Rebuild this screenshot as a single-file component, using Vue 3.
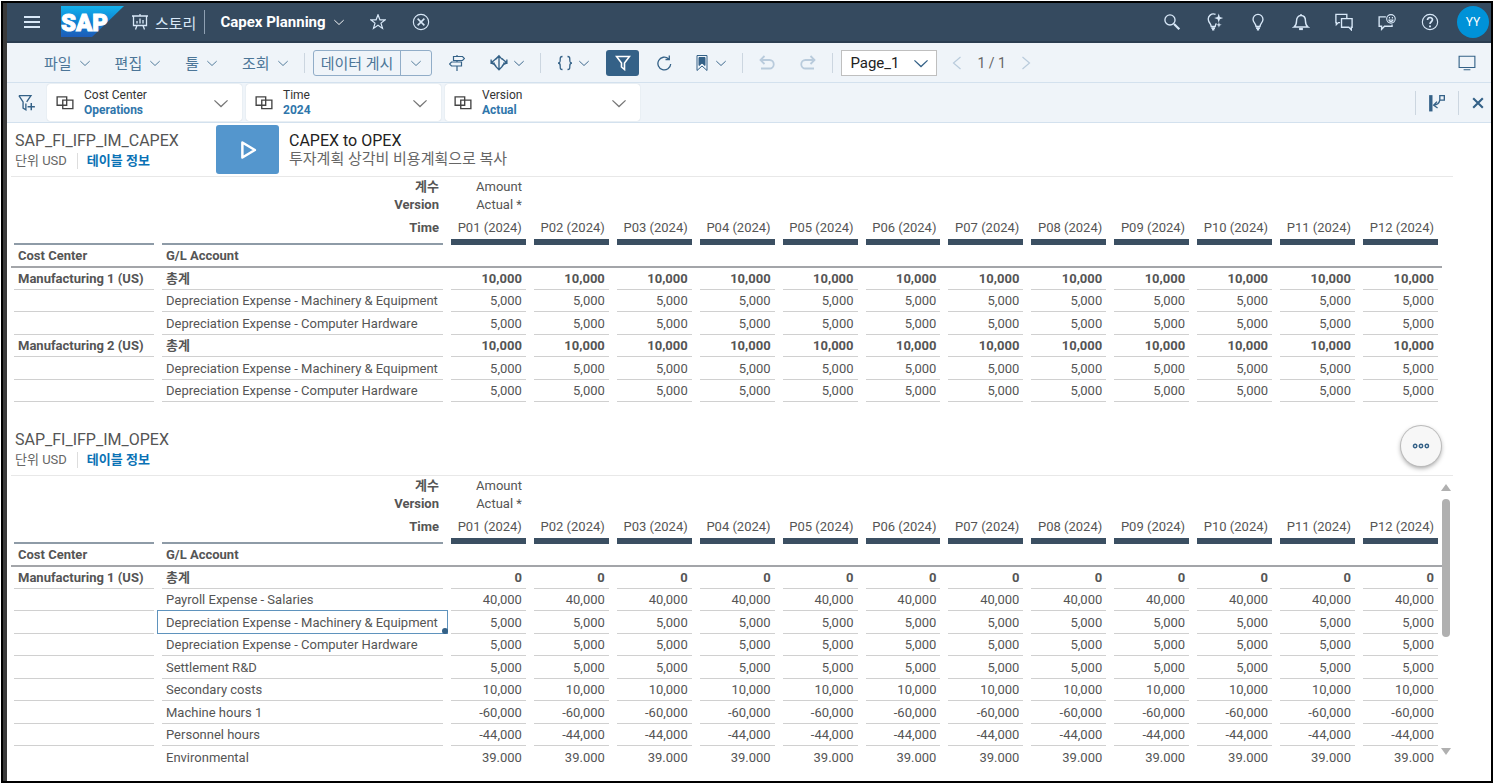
<template>
  <div class="app-frame">
    <header class="shell">
      <button class="icon-btn menu-btn" aria-label="Menu"><Icon name="menu" /></button>
      <svg class="logo" width="63" height="32" viewBox="0 0 63 32" role="img" aria-label="SAP">
        <defs>
          <linearGradient id="logoFill" x1="0" y1="0" x2="0" y2="1">
            <stop offset="0" stop-color="#12b2ee" />
            <stop offset="0.5" stop-color="#1083d2" />
            <stop offset="1" stop-color="#1d5cb8" />
          </linearGradient>
        </defs>
        <path d="M0 0H63L31 31H0Z" fill="url(#logoFill)" />
        <text x="0" y="25" class="logo-text">SAP</text>
      </svg>
      <a href="#" class="story-link"><Icon name="story" />스토리</a>
      <span class="shell-divider"></span>
      <button class="story-title">Capex Planning <Icon name="chevron" :size="10" /></button>
      <button class="icon-btn star-btn" aria-label="Favorite"><Icon name="star" /></button>
      <button class="icon-btn" aria-label="Close story"><Icon name="closeCircle" :size="18" /></button>
      <div class="shell-actions">
        <button v-for="a in shellActions" :key="a.icon" class="icon-btn" :aria-label="a.label">
          <Icon :name="a.icon" :size="18" />
        </button>
        <button class="avatar">YY</button>
      </div>
    </header>

    <div class="toolbar">
      <div class="menus">
        <button v-for="m in menus" :key="m" class="tool">{{ m }}<Icon name="chevron" :size="10" /></button>
      </div>
      <span class="divider after-menus"></span>
      <div class="split-btn">
        <button class="split-main">데이터 게시</button>
        <button class="split-arrow" aria-label="데이터 게시 옵션"><Icon name="chevron" :size="10" /></button>
      </div>
      <div class="tool-group">
        <button class="tool" aria-label="Actions"><Icon name="signpost" /></button>
        <button class="tool" aria-label="Allocate"><Icon name="distribute" :size="18" /><Icon name="chevron" :size="10" /></button>
      </div>
      <span class="divider"></span>
      <div class="tool-group tight">
        <button class="tool" aria-label="Formula"><Icon name="braces" /><Icon name="chevron" :size="10" /></button>
        <button class="tool-active" aria-label="Filter"><Icon name="filter" /></button>
        <button class="tool" aria-label="Refresh"><Icon name="refresh" /></button>
        <button class="tool bookmark" aria-label="Bookmark"><Icon name="bookmark" /><Icon name="chevron" :size="10" /></button>
      </div>
      <span class="divider"></span>
      <div class="tool-group">
        <button class="tool" aria-label="Undo" disabled><Icon name="undo" /></button>
        <button class="tool" aria-label="Redo" disabled><Icon name="redo" /></button>
      </div>
      <span class="divider before-select"></span>
      <div class="page-select">
        <select v-model="page" aria-label="Page">
          <option>Page_1</option>
        </select>
        <Icon name="chevron" :size="14" />
      </div>
      <div class="pager">
        <button aria-label="Previous page" disabled><Icon name="left" /></button>
        <span>1 / 1</span>
        <button aria-label="Next page" disabled><Icon name="right" /></button>
      </div>
      <button class="tool device" aria-label="Display"><Icon name="monitor" :size="18" /></button>
    </div>

    <div class="filter-bar">
      <button class="tool add-filter" aria-label="Add filter"><Icon name="filterAdd" :size="18" /></button>
      <button v-for="f in filters" :key="f.name" class="filter-card">
        <Icon name="overlap" :size="18" />
        <span class="filter-text">
          <span>{{ f.name }}</span>
          <strong>{{ f.value }}</strong>
        </span>
        <Icon class="card-arrow" name="chevron" :size="14" />
      </button>
      <div class="filter-actions">
        <span class="divider"></span>
        <button class="tool" aria-label="Dock filter"><Icon name="dock" :size="18" /></button>
        <span class="divider"></span>
        <button class="tool" aria-label="Close filter"><Icon name="close" :size="14" /></button>
      </div>
    </div>

    <main>
      <section v-for="s in sections" :key="s.title" class="model">
        <div class="model-head">
          <div class="model-name">
            <h2>{{ s.title }}</h2>
            <p><span class="unit">단위 USD</span><a href="#">테이블 정보</a></p>
          </div>
          <template v-if="s.action">
            <button class="run-btn" :aria-label="s.action"><Icon name="play" :size="20" /></button>
            <div class="run-text">
              <h3>{{ s.action }}</h3>
              <p>{{ s.actionText }}</p>
            </div>
          </template>
          <button v-else class="more-btn" aria-label="More">
            <Icon name="dots" :size="18" />
          </button>
        </div>
        <div class="model-body">
          <table>
            <colgroup>
              <col class="col-center" />
              <col class="col-account" />
              <col v-for="p in periods" :key="p" />
            </colgroup>
            <thead>
              <tr class="r-measure">
                <td></td>
                <th><div class="cell">계수</div></th>
                <td><div class="cell">Amount</div></td>
                <td colspan="11"></td>
              </tr>
              <tr class="r-version">
                <td></td>
                <th><div class="cell">Version</div></th>
                <td><div class="cell">Actual *</div></td>
                <td colspan="11"></td>
              </tr>
              <tr class="r-time">
                <td><div class="cell"></div></td>
                <th><div class="cell">Time</div></th>
                <th v-for="p in periods" :key="p" class="period"><div class="cell">{{ p }}</div></th>
              </tr>
              <tr class="r-dims">
                <th><div class="cell">Cost Center</div></th>
                <th><div class="cell">G/L Account</div></th>
                <td colspan="12"></td>
              </tr>
            </thead>
            <tbody>
              <tr v-for="(r, i) in s.rows" :key="i" :class="{ total: r.total }">
                <th><div class="cell">{{ r.center }}</div></th>
                <th :class="{ selected: r.selected }"><div class="cell">{{ r.account }}</div></th>
                <td v-for="p in periods" :key="p"><div class="cell">{{ r.value }}</div></td>
              </tr>
            </tbody>
          </table>
          <div v-if="s.scroll" class="scrollbar">
            <span class="arrow up"></span>
            <span class="track"><span class="thumb"></span></span>
            <span class="arrow down"></span>
          </div>
        </div>
      </section>
    </main>
  </div>
</template>

<script setup>
import { h, ref } from 'vue';

// 16x16 line icons
const icons = {
  menu: '<path d="M0 3h16M0 8h16M0 13h16" stroke-width="2"/>',
  story: '<path d="M0 2h16M1.5 2v9.500h13V2M5 11.500L3.500 15.500M11 11.500l1.500 4M5 9.500V7M8 9.500v-5M11 9.500V6M8 0v2" stroke-width="1.300"/>',
  chevron: '<path d="M.5 5L8 12l7.500-7" stroke-width="1.500"/>',
  star: '<path d="M8 .8l1.900 5h5.300l-4.200 3.300 1.500 5.300L8 11.300l-4.500 3.100L5 9.100.8 5.800h5.300z" stroke-width="1.200"/>',
  closeCircle: '<circle cx="8" cy="8" r="6.800"/><path d="M5 5l6 6M11 5l-6 6" stroke-width="1.400"/>',
  search: '<circle cx="6.200" cy="6.200" r="4.500" stroke-width="1.200"/><path d="M9.800 9.800l4.700 4.700" stroke-width="2"/>',
  bulbSpark: '<path d="M8.500 1.300A4.500 4.500 0 0 0 2.200 6.500c.3 2.300 2.200 2.700 2.400 5.500h3.600c.1-1.400.5-2.100 1-2.800" stroke-width="1.200"/><path d="M4.800 13.500h3.200M5.400 14.800h2" stroke-width="1.600"/><path d="M11.300 .5l1 3 3 1-3 1-1 3-1-3-3-1 3-1zM11.500 8l.6 1.900 1.900.6-1.900.6-.6 1.900-.6-1.900-1.900-.6 1.900-.6z" fill="currentColor" stroke="none"/>',
  bulb: '<path d="M8 1.200a4.400 4.400 0 0 0-4.400 4.600c0 2.700 2.400 3.300 2.600 6.200h3.600c.2-2.900 2.600-3.500 2.600-6.200A4.400 4.400 0 0 0 8 1.200z" stroke-width="1.200"/><path d="M6.300 13.500h3.400M7 14.900h2" stroke-width="1.500"/>',
  bell: '<path d="M1.800 12.500c1.700-1.200 2.200-2.500 2.200-5.200C4 4.200 5.500 2.300 8 2.300s4 1.900 4 5c0 2.700.5 4 2.200 5.200zM8 2.300V.8" stroke-width="1.300"/><path d="M6.300 14.200h3.400" stroke-width="2"/>',
  chats: '<path d="M4.500 8.500H3L1.200 10.300V8.500H.8v-7.300h9.700V4.500M5.800 5h9.400v7.700h-.7V15l-2.200-2.300H5.800z" stroke-width="1.200"/>',
  feedback: '<path d="M7 3.500H1v8.300h2.200v2.700l2.600-2.700h6.700v-1.500" stroke-width="1.200"/><circle cx="11.500" cy="5.200" r="3.800"/><path d="M10.200 3.500v1.300M12.800 3.500v1.300M9.200 6.200h4.600M9.700 6.500c.8 1.500 2.800 1.500 3.600 0"/>',
  help: '<circle cx="8" cy="8" r="6.800"/><path d="M5.800 6.300c0-3 4.400-3 4.400-.2C10.200 7.800 8 7.800 8 9.800" stroke-width="1.500"/><path d="M8 11v1.600" stroke-width="1.700"/>',
  signpost: '<path d="M8 0v1.500M4.500 1.500h9l2 2-2 2h-9zM8 5.500V7M12.500 7h-10l-2 2 2 2h10zM8 11v5" stroke-width="1.200"/>',
  distribute: '<path d="M8 2v11M5.500 4.500L8 1.500l2.500 3M8 1.500L5.500 4C4.200 5.300 2.800 6 1.200 8c2 .5 3.500 1.500 4.300 3.500L8 14l2.500-2.500c.8-2 2.300-3 4.300-3.500-1.600-2-3-2.700-4.300-4M1 4.800V8.200h3.300M15 4.800v3.400h-3.300" stroke-width="1.200"/>',
  braces: '<path d="M5.500 1.500C3 1.500 3.200 3 3.200 5S3 8 1 8c2 0 2.200 1 2.200 3s-.2 3.500 2.300 3.500M10.500 1.500c2.500 0 2.300 1.500 2.300 3.500s.2 3 2.200 3c-2 0-2.200 1-2.200 3s.2 3.500-2.300 3.500" stroke-width="1.300"/>',
  filter: '<path d="M1.500 1.500h13L9.500 8v6.500l-3-2.500V8z" stroke-width="1.600"/>',
  filterAdd: '<path d="M.8 1.500h10.700L7.700 7M.8 1.500L4.500 7v5.500l2.500 1.500V8.500" stroke-width="1.200"/><path d="M11.800 8v6.500M8.500 11.300h6.500" stroke-width="1.300"/>',
  refresh: '<path d="M12.500 3.700A6.400 6.400 0 1 0 14.700 9M9.500 4.500h3.800V.5" stroke-width="1.300"/>',
  bookmark: '<path d="M3 .5h10v15l-5-4.500-5 4.500z"/><path d="M5 2.500h6v8L8 8l-3 2.500z" fill="currentColor"/>',
  undo: '<path d="M5.500 1L1.500 5l4 4M1.500 5H10.500a4 4 0 0 1 0 8.500H2" stroke-width="1.800"/>',
  redo: '<path d="M10.500 1l4 4-4 4M14.500 5H5.500a4 4 0 0 0 0 8.500H14" stroke-width="1.800"/>',
  left: '<path d="M11.500 2L4.500 8l7 6" stroke-width="1.200"/>',
  right: '<path d="M4.500 2l7 6-7 6" stroke-width="1.200"/>',
  monitor: '<path d="M1 2h14v10H1zM5 14h6"/>',
  overlap: '<path d="M1 2.500h8.500v7.500H1zM6 5.500h9V13H6z" stroke-width="1.200"/>',
  dock: '<path d="M1 1h3v14.500H1z" fill="currentColor" stroke="none"/><path d="M10.500 1.500h4v4h-4zM10.500 5.500C10 8 8 9.800 5 10M8 6.800L5 10l3.500 2.500" stroke-width="1.200"/>',
  close: '<path d="M2.500 2.500l11 11M13.500 2.500l-11 11" stroke-width="2.400"/>',
  play: '<path d="M3.500 2l10 6-10 6z" stroke-width="2" stroke-linejoin="round"/>',
  dots: '<circle cx="2.800" cy="8" r="1.500" stroke-width="1.300"/><circle cx="8" cy="8" r="1.500" stroke-width="1.300"/><circle cx="13.200" cy="8" r="1.500" stroke-width="1.300"/>'
};

const Icon = (props) => h('svg', {
  viewBox: '0 0 16 16',
  width: props.size || 16,
  height: props.size || 16,
  fill: 'none',
  stroke: 'currentColor',
  'aria-hidden': 'true',
  innerHTML: icons[props.name]
});
Icon.props = ['name', 'size'];

const page = ref('Page_1');

const menus = ['파일', '편집', '툴', '조회'];

const shellActions = [
  { icon: 'search', label: 'Search' },
  { icon: 'bulbSpark', label: 'Insights' },
  { icon: 'bulb', label: 'Ideas' },
  { icon: 'bell', label: 'Notifications' },
  { icon: 'chats', label: 'Discussions' },
  { icon: 'feedback', label: 'Feedback' },
  { icon: 'help', label: 'Help' }
];

const filters = [
  { name: 'Cost Center', value: 'Operations' },
  { name: 'Time', value: '2024' },
  { name: 'Version', value: 'Actual' }
];

const periods = Array.from({ length: 12 }, (_, i) => `P${String(i + 1).padStart(2, '0')} (2024)`);

const machinery = 'Depreciation Expense - Machinery & Equipment';
const hardware = 'Depreciation Expense - Computer Hardware';

const sections = [
  {
    title: 'SAP_FI_IFP_IM_CAPEX',
    action: 'CAPEX to OPEX',
    actionText: '투자계획 상각비 비용계획으로 복사',
    rows: [
      { center: 'Manufacturing 1 (US)', account: '총계', value: '10,000', total: true },
      { account: machinery, value: '5,000' },
      { account: hardware, value: '5,000' },
      { center: 'Manufacturing 2 (US)', account: '총계', value: '10,000', total: true },
      { account: machinery, value: '5,000' },
      { account: hardware, value: '5,000' }
    ]
  },
  {
    title: 'SAP_FI_IFP_IM_OPEX',
    scroll: true,
    rows: [
      { center: 'Manufacturing 1 (US)', account: '총계', value: '0', total: true },
      { account: 'Payroll Expense - Salaries', value: '40,000' },
      { account: machinery, value: '5,000', selected: true },
      { account: hardware, value: '5,000' },
      { account: 'Settlement R&D', value: '5,000' },
      { account: 'Secondary costs', value: '10,000' },
      { account: 'Machine hours 1', value: '-60,000' },
      { account: 'Personnel hours', value: '-44,000' },
      { account: 'Environmental', value: '39.000' }
    ]
  }
];
</script>

<style>
body { background: #fff; }
</style>

<style scoped>
.app-frame {
  box-sizing: border-box;
  min-height: calc(100vh - 2px);
  margin: 1px;
  border: 2px solid #000;
  box-shadow: inset 4px 0 0 #3a3a3a;
  padding-left: 4px;
  background: #fff;
  color: #555;
  font-family: Roboto, "Noto Sans CJK KR", sans-serif;
  font-size: 13px;
}

button {
  display: flex;
  align-items: center;
  justify-content: center;
  padding: 0;
  border: none;
  background: none;
  color: inherit;
  font: inherit;
  cursor: pointer;
}

h2, h3, p { margin: 0; font-weight: 400; }
svg { display: block; flex: none; }

/* shell bar */
.shell {
  display: flex;
  align-items: center;
  height: 38px;
  padding-left: 17px;
  border-bottom: 2px solid #2b3d50;
  background: #354a5f;
  color: #d8e8f8;
}

.logo { margin-left: 21px; }
.logo-text { fill: #fff; stroke: #fff; stroke-width: 1; font-family: Roboto, sans-serif; font-size: 24px; font-weight: 900; }
.story-link { display: flex; align-items: center; gap: 7px; margin-left: 8px; color: inherit; font-size: 15px; text-decoration: none; }
.shell-divider { width: 1px; height: 24px; margin: 0 15px 0 8px; background: #8fa0b2; }
.story-title { gap: 8px; color: #fff; font-size: 15px; font-weight: 700; }
.star-btn { margin: 0 26px; }
.shell-actions { display: flex; align-items: center; gap: 25px; margin-left: auto; padding-right: 2px; }
.avatar { width: 32px; height: 32px; margin-left: -7px; border-radius: 50%; background: #0092d8; color: #fff; font-size: 12px; }

/* toolbar */
.toolbar {
  display: flex;
  align-items: center;
  height: 39px;
  padding-left: 37px;
  border-bottom: 1px solid #d3e1ee;
  background: #eff4f9;
  color: #346187;
}

.menus { display: flex; gap: 25px; font-size: 15px; }
.tool { gap: 6px; }
.menus .tool { gap: 8px; color: #4c7698; }
.tool:disabled { color: #b9cbdc; }
.divider { width: 1px; height: 20px; margin: 0 16px; background: #ccd6e0; }
.divider.after-menus, .divider.before-select { margin-right: 8px; }
.tool-group { display: flex; align-items: center; gap: 25px; }
.tool-group.tight { gap: 17px; }
.bookmark { margin-left: 5px; }
.split-btn { display: flex; height: 24px; margin-right: 17px; border: 1px solid #91adc8; border-radius: 3px; color: #4c7698; font-size: 15px; }
.split-main { padding: 0 7px; border-right: 1px solid #91adc8; }
.split-arrow { width: 30px; }
.tool-active { width: 33px; height: 26px; border-radius: 3px; background: #346187; color: #fff; }
.page-select { position: relative; color: #346187; }
.page-select select {
  width: 96px;
  height: 26px;
  padding: 0 8px;
  border: 1px solid #bfbfbf;
  border-radius: 0;
  appearance: none;
  background: #fff;
  color: #222;
  font: 15px Roboto, sans-serif;
}
.page-select svg { position: absolute; top: 6px; right: 9px; pointer-events: none; }
.pager { display: flex; align-items: center; gap: 12px; margin-left: 12px; color: #666; font-size: 14px; }
.pager button { color: #b9cbdc; }
.device { margin: 0 15px 0 auto; }

/* filter bar */
.filter-bar {
  display: flex;
  align-items: center;
  gap: 4px;
  height: 39px;
  border-bottom: 1px solid #d3e1ee;
  background: #eff4f9;
  color: #346187;
}

.add-filter { width: 36px; padding-left: 4px; box-sizing: border-box; }
.filter-card {
  box-sizing: border-box;
  width: 195px;
  height: 37px;
  padding: 0 14px 0 9px;
  border-radius: 3px;
  background: #fff;
  box-shadow: 0 0 1px #b5c2ce;
  color: #444;
  text-align: left;
}
.filter-text { display: flex; flex: 1; flex-direction: column; margin-left: 10px; font-size: 12px; line-height: 15px; color: #333; }
.filter-text strong { color: #2f76ab; }
.card-arrow { color: #777; }
.filter-actions { display: flex; align-items: center; height: 24px; margin-left: auto; padding-right: 6px; }
.filter-actions .divider { height: 24px; margin: 0 12px; }

/* models */
.model { margin: 0 38px 20px 4px; }
.model:last-child { margin-bottom: 0; }
.model-head { display: flex; align-items: center; height: 53px; padding-left: 4px; border-bottom: 1px solid #e8e8e8; }
.model-name { width: 201px; padding-top: 2px; }
.model-name h2 { font-size: 16px; line-height: 20px; color: #555; }
.model-name p { display: flex; align-items: center; font-size: 13px; line-height: 20px; color: #666; }
.unit { padding-right: 10px; border-right: 1px solid #ddd; line-height: 16px; }
.model-name a { margin-left: 9px; color: #0a72b5; font-weight: 700; text-decoration: none; }
.run-btn { width: 63px; height: 49px; border-radius: 3px; background: #5496cd; color: #fff; }
.run-text { margin-left: 10px; }
.run-text h3 { font-size: 16px; line-height: 19px; color: #222; }
.run-text p { font-size: 15px; line-height: 19px; color: #666; }
.more-btn {
  width: 40px;
  height: 40px;
  margin: 0 12px 6px auto;
  border-radius: 50%;
  background: #f7f7f7;
  box-shadow: 0 0 0 1px #bbb, 0 2px 5px #999;
  color: #346187;
}

.model-body { display: flex; }
table { flex: 1; width: 100%; border-collapse: collapse; table-layout: fixed; }
.col-center { width: 147px; }
.col-account { width: 289px; }
th, td { padding: 0; font-weight: 400; text-align: right; }
.cell { box-sizing: border-box; height: 22px; margin: 0 4px; padding: 0 4px; border-bottom: 1px solid #d0d0d0; line-height: 22px; white-space: nowrap; }
tr > :first-child .cell { margin-left: 3px; }

thead tr:nth-child(-n+3) th:nth-child(2), .r-dims th, .total th, .total td { font-weight: 700; }
.r-measure .cell { height: 19px; border: none; line-height: 20px; }
.r-version .cell { height: 17px; border: none; line-height: 17px; }
.r-time .cell { height: 32px; padding-top: 4px; border-bottom: 2px solid #8e9ba7; line-height: 22px; }
.r-time .period .cell { border-bottom: 6px solid #3b4f62; font-weight: 400; }
.r-dims .cell { height: 21px; border: none; }
.r-dims th, .r-dims td { border-bottom: 2px solid #a3a5a9; }
.r-dims th, tbody th { text-align: left; }
tbody tr:nth-child(2n+3) .cell { height: 23px; line-height: 23px; }
.model:last-child tbody tr:last-child .cell { border-bottom: none; }

.selected { position: relative; }
.selected::before { content: ""; position: absolute; inset: -1px -1px 0 -1px; border: 1px solid #5f93bd; }
.selected::after { content: ""; position: absolute; right: -1px; bottom: 0; width: 6px; height: 6px; border-radius: 50%; background: #346187; }

.scrollbar { display: flex; flex-direction: column; align-items: center; width: 8px; margin: 8px 3px 14px 0; }
.model:first-child .model-body { padding-right: 11px; }
.arrow { border: 5px solid transparent; }
.arrow.up { border-top: none; border-bottom: 7px solid #b0b0b0; }
.arrow.down { border-bottom: none; border-top: 7px solid #b0b0b0; }
.track { flex: 1; width: 8px; padding: 8px 0; }
.thumb { display: block; height: 138px; border-radius: 4px; background: #b0b0b0; }
</style>
